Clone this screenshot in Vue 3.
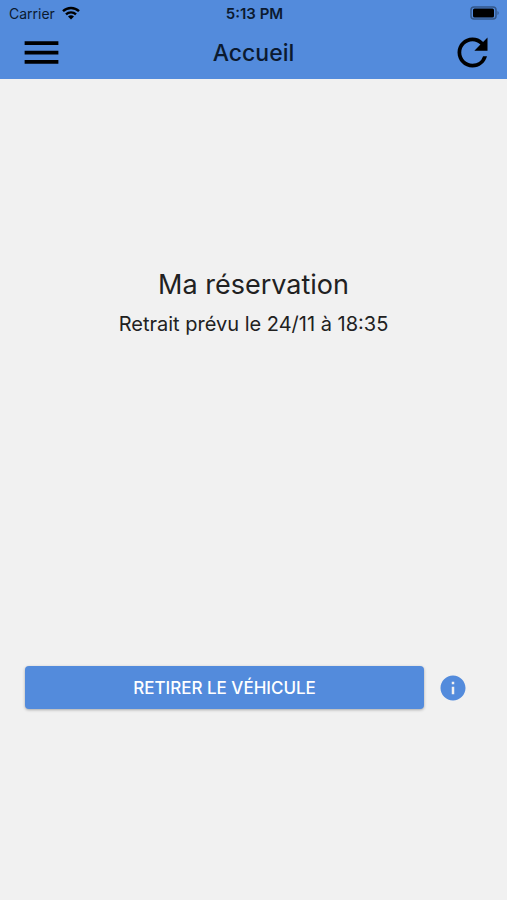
<script setup>
const status = { carrier: 'Carrier', time: '5:13 PM' }
const booking = {
  title: 'Ma réservation',
  pickup: 'Retrait prévu le 24/11 à 18:35',
}
</script>

<template>
  <div class="screen">
    <header class="header">
      <div class="status">
        <div class="carrier">
          <span>{{ status.carrier }}</span>
          <svg class="wifi" viewBox="0 0 18 14" aria-hidden="true">
            <path d="M1 5.2a11.5 11.5 0 0 1 16 0" />
            <path d="M4 8.4a7.2 7.2 0 0 1 10 0" />
            <path class="dot" d="M6 10.6a4.4 4.4 0 0 1 6 0L9 13.6z" />
          </svg>
        </div>
        <span class="time">{{ status.time }}</span>
        <svg class="battery" viewBox="0 0 30 14" aria-hidden="true">
          <rect class="shell" x="1" y="1" width="25" height="12" rx="3" />
          <rect x="3" y="2.500" width="21" height="9" rx="1.500" />
          <path class="cap" d="M27.5 5v4c1.6-.5 1.6-3.500 0-4z" />
        </svg>
      </div>
      <div class="toolbar">
        <button class="icon-button menu" type="button" aria-label="Menu">
          <svg viewBox="0 0 24 24" aria-hidden="true">
            <path d="M3 18h18v-2H3v2zm0-5h18v-2H3v2zm0-7v2h18V6H3z" />
          </svg>
        </button>
        <h1 class="heading">Accueil</h1>
        <button class="icon-button refresh" type="button" aria-label="Actualiser">
          <svg viewBox="0 0 24 24" aria-hidden="true">
            <path d="M17.65 6.35A7.958 7.958 0 0 0 12 4c-4.420 0-7.990 3.580-7.990 8s3.570 8 7.990 8c3.730 0 6.840-2.550 7.730-6h-2.080A5.990 5.990 0 0 1 12 18c-3.310 0-6-2.690-6-6s2.690-6 6-6c1.660 0 3.140.69 4.220 1.780L13 11h7V4l-2.350 2.350z" />
          </svg>
        </button>
      </div>
    </header>

    <main class="content">
      <section class="booking">
        <h2 class="title">{{ booking.title }}</h2>
        <p class="pickup">{{ booking.pickup }}</p>
      </section>
      <div class="actions">
        <button class="primary" type="button">Retirer le véhicule</button>
        <button class="info" type="button" aria-label="Informations">
          <svg viewBox="0 0 24 24" aria-hidden="true">
            <path d="M12 2C6.480 2 2 6.480 2 12s4.480 10 10 10 10-4.480 10-10S17.520 2 12 2zm1 15h-2v-6h2v6zm0-8h-2V7h2v2z" />
          </svg>
        </button>
      </div>
    </main>
  </div>
</template>

<style>
body {
  background: #f1f1f1;
}
</style>

<style scoped>
.screen {
  display: flex;
  flex-direction: column;
  min-height: 100vh;
  background: #f1f1f1;
  color: #212121;
  font-family: Inter, "Liberation Sans", sans-serif;
}

button {
  margin: 0;
  padding: 0;
  border: 0;
  background: none;
  font: inherit;
  cursor: pointer;
}

svg {
  display: block;
}

.header {
  background: #538bdc;
}

.status {
  display: grid;
  grid-template-columns: 1fr auto 1fr;
  align-items: center;
  height: 26px;
  padding: 0 7px 0 9px;
  color: #0b1a30;
  font-size: 14px;
}

.carrier {
  display: flex;
  align-items: center;
  gap: 7px;
}

.wifi {
  width: 18px;
  height: 14px;
  fill: none;
  stroke: #000;
  stroke-width: 2.4;
}

.wifi .dot {
  fill: #000;
  stroke: none;
}

.time {
  font-size: 15px;
  font-weight: 600;
}

.battery {
  justify-self: end;
  width: 30px;
  height: 14px;
}

.shell {
  fill: none;
  stroke: #335789;
  stroke-width: 1.5;
}

.cap {
  fill: #335789;
}

.toolbar {
  display: grid;
  grid-template-columns: 1fr auto 1fr;
  align-items: center;
  height: 53px;
  padding: 0 12px;
}

.icon-button {
  width: 45px;
  height: 45px;
  color: #000;
}

.menu {
  margin-left: 7px;
}

.refresh {
  justify-self: end;
}

.icon-button svg {
  width: 100%;
  height: 100%;
  fill: currentColor;
}

.heading {
  margin: 0;
  color: #0b1a30;
  font-size: 23px;
  font-weight: 500;
  line-height: 32px;
}

.content {
  display: flex;
  flex: 1;
  flex-direction: column;
  padding-bottom: 191px;
}

.booking {
  flex: 1;
  padding: 188px 24px 24px;
  text-align: center;
}

.title {
  margin: 0;
  font-size: 27px;
  font-weight: 400;
  line-height: 36px;
}

.pickup {
  margin: 8px 0 0;
  font-size: 20px;
  line-height: 26px;
}

.actions {
  display: flex;
  align-items: center;
  gap: 14px;
  padding: 0 39px 0 25px;
}

.primary {
  flex: 1;
  height: 43px;
  border-radius: 4px;
  background: #538bdc;
  box-shadow: 0 1px 3px rgba(0, 0, 0, 0.3);
  color: #fff;
  font-size: 17px;
  font-weight: 500;
  text-transform: uppercase;
}

.info {
  width: 30px;
  height: 30px;
  color: #538bdc;
}

.info svg {
  width: 100%;
  height: 100%;
  fill: currentColor;
}
</style>
